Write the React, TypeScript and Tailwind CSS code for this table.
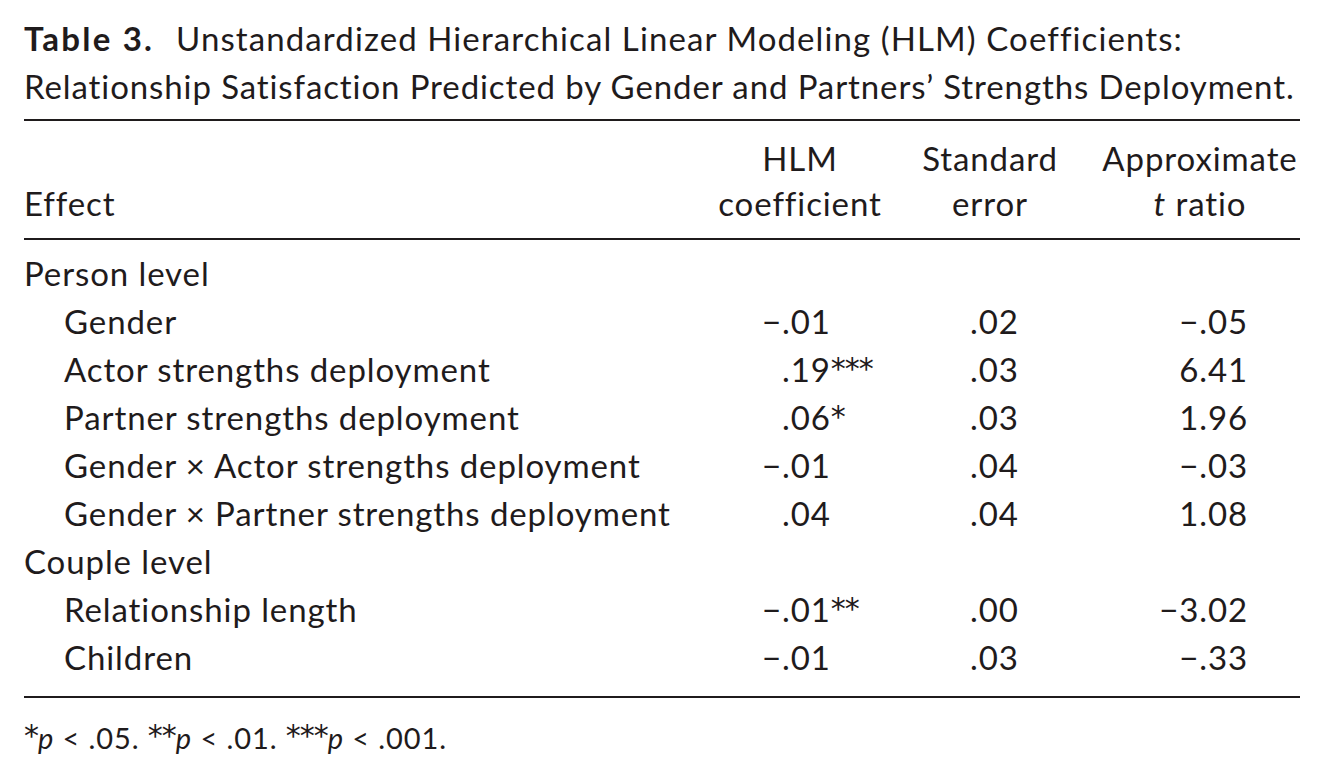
import React from "react";

type Row = {
  label: string;
  coef?: string;
  neg?: boolean;
  stars?: string;
  se?: string;
  t?: string;
  indent?: boolean;
};

const rows: Row[] = [
  { label: "Person level" },
  { label: "Gender", coef: ".01", neg: true, se: ".02", t: "−.05", indent: true },
  { label: "Actor strengths deployment", coef: ".19", stars: "***", se: ".03", t: "6.41", indent: true },
  { label: "Partner strengths deployment", coef: ".06", stars: "*", se: ".03", t: "1.96", indent: true },
  { label: "Gender × Actor strengths deployment", coef: ".01", neg: true, se: ".04", t: "−.03", indent: true },
  { label: "Gender × Partner strengths deployment", coef: ".04", se: ".04", t: "1.08", indent: true },
  { label: "Couple level" },
  { label: "Relationship length", coef: ".01", neg: true, stars: "**", se: ".00", t: "−3.02", indent: true },
  { label: "Children", coef: ".01", neg: true, se: ".03", t: "−.33", indent: true },
];

// big six-armed asterisks like the print face, sitting near cap height
const Stars = ({ s }: { s: string }) => (
  <span className="relative -top-[3px] font-['DejaVu_Sans',sans-serif] text-[30px] leading-none tracking-[-1px]">
    {s}
  </span>
);

export default function App() {
  return (
    <div className="min-h-screen w-full bg-white font-['Lato',sans-serif] text-[#1f1b1c] tracking-[0.9px]">
      <div className="w-[1300px] pl-[24px] pt-[14px]">
        {/* caption */}
        <p className="text-[33px] leading-[48px]">
          <span className="font-bold tracking-[2.2px]">Table 3.</span>
          <span className="ml-[22px] tracking-[1.1px]">
            Unstandardized Hierarchical Linear Modeling (HLM) Coefficients:
          </span>
          <br />
          Relationship Satisfaction Predicted by Gender and Partners’ Strengths Deployment.
        </p>

        <div className="mt-[9px] border-t-2 border-b-2 border-[#1f1b1c] text-[33px]">
          {/* header */}
          <div className="grid grid-cols-[676px_200px_180px_220px] border-b-2 border-[#1f1b1c] pt-[15px] pb-[12px] leading-[45px]">
            <div className="flex items-end">Effect</div>
            <div className="text-center">
              HLM
              <br />
              coefficient
            </div>
            <div className="text-center">
              Standard
              <br />
              error
            </div>
            <div className="pl-[20px] text-center">
              Approximate
              <br />
              <span className="italic">t</span> ratio
            </div>
          </div>

          {/* body */}
          <div className="pt-[9px] pb-[15px] leading-[48px]">
            {rows.map((r) => (
              <div key={r.label} className="grid h-[48px] grid-cols-[676px_200px_180px_220px]">
                <div className={r.indent ? "pl-[40px]" : ""}>{r.label}</div>
                <div className="pl-[62px]">
                  {r.coef && (
                    <>
                      <span className={r.neg ? "" : "invisible"}>−</span>
                      {r.coef}
                      {r.stars && <Stars s={r.stars} />}
                    </>
                  )}
                </div>
                <div className="pl-[70px]">{r.se}</div>
                <div className="pr-[52px] text-right">{r.t}</div>
              </div>
            ))}
          </div>
        </div>

        {/* note */}
        <p className="mt-[16px] text-[29px] leading-[48px]">
          <Stars s="*" />
          <span className="italic">p</span> &lt; .05. <Stars s="**" />
          <span className="italic">p</span> &lt; .01. <Stars s="***" />
          <span className="italic">p</span> &lt; .001.
        </p>
      </div>
    </div>
  );
}
